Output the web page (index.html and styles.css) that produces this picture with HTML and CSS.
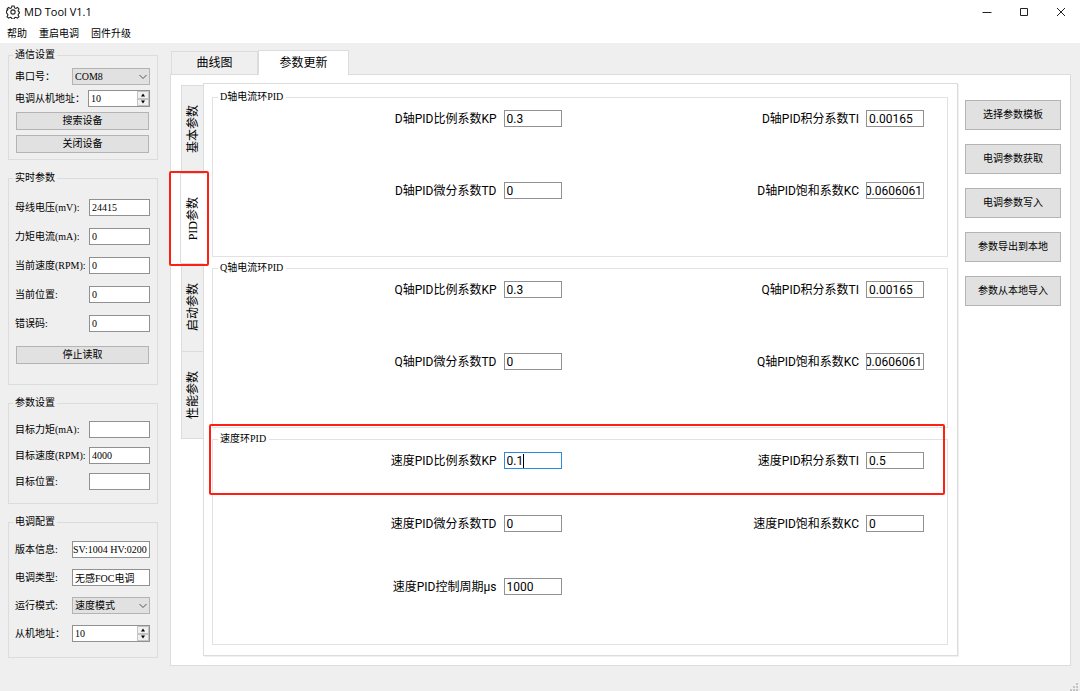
FILE: index.html
```html
<!DOCTYPE html>
<html lang="zh-CN">
<head>
<meta charset="utf-8">
<title>MD Tool V1.1</title>
<link rel="stylesheet" href="styles.css">
</head>
<body>
<header class="titlebar">
  <svg class="gear" viewBox="0 0 26 26" aria-hidden="true">
    <path d="M11 2h4l1 3.4 2.2.9 3.1-1.7 2.8 2.8-1.7 3.1.9 2.2 1.7.3v2l-1.7 1.3-.9 2.2 1.7 3.1-2.8 2.8-3.1-1.7-2.2.9-1 2.4h-4l-1-2.4-2.2-.9-3.1 1.7-2.8-2.8 1.7-3.1-.9-2.2L1 15v-4l1.700-.9.9-2.200-1.700-.5 2.800-2.800 3.100 1.700 2.200-.9z"/>
    <circle cx="13" cy="13" r="4"/>
  </svg>
  <h1 class="title">MD Tool V1.1</h1>
  <div class="winctl">
    <button type="button" aria-label="最小化"><svg viewBox="0 0 10 10"><path d="M0.500 5.500h9"/></svg></button>
    <button type="button" aria-label="最大化"><svg viewBox="0 0 10 10"><path d="M1.500 1.500h7v7h-7z"/></svg></button>
    <button type="button" aria-label="关闭"><svg viewBox="0 0 10 10"><path d="M1 1l8 8M9 1l-8 8"/></svg></button>
  </div>
</header>
<nav class="menubar">
  <button type="button">帮助</button>
  <button type="button">重启电调</button>
  <button type="button">固件升级</button>
</nav>

<div class="workspace">
  <aside class="sidebar">
    <fieldset class="group comm">
      <legend>通信设置</legend>
      <div class="row">
        <label for="port">串口号：</label>
        <span class="combo wide"><select id="port"><option>COM8</option></select><svg viewBox="0 0 8 6"><path d="M.5 1l3.500 3.500L7.500 1"/></svg></span>
      </div>
      <div class="row">
        <label for="addr">电调从机地址：</label>
        <span class="spin"><input id="addr" type="number" value="10"><span class="steps"><button type="button" aria-label="增加"><svg viewBox="0 0 6 4"><path d="M1 3.500h4L3 .5z"/></svg></button><button type="button" aria-label="减少"><svg viewBox="0 0 6 4"><path d="M1 .5h4L3 3.500z"/></svg></button></span></span>
      </div>
      <button type="button" class="btn">搜索设备</button>
      <button type="button" class="btn">关闭设备</button>
    </fieldset>

    <fieldset class="group live">
      <legend>实时参数</legend>
      <div class="row"><label for="volt">母线电压(mV):</label><input id="volt" class="box" type="text" value="24415"></div>
      <div class="row"><label for="cur">力矩电流(mA):</label><input id="cur" class="box" type="text" value="0"></div>
      <div class="row"><label for="rpm">当前速度(RPM):</label><input id="rpm" class="box" type="text" value="0"></div>
      <div class="row"><label for="pos">当前位置:</label><input id="pos" class="box" type="text" value="0"></div>
      <div class="row"><label for="err">错误码:</label><input id="err" class="box" type="text" value="0"></div>
      <button type="button" class="btn">停止读取</button>
    </fieldset>

    <fieldset class="group target">
      <legend>参数设置</legend>
      <div class="row"><label for="tcur">目标力矩(mA):</label><input id="tcur" class="box" type="text"></div>
      <div class="row"><label for="trpm">目标速度(RPM):</label><input id="trpm" class="box" type="text" value="4000"></div>
      <div class="row"><label for="tpos">目标位置:</label><input id="tpos" class="box" type="text"></div>
    </fieldset>

    <fieldset class="group config">
      <legend>电调配置</legend>
      <div class="row"><label for="ver">版本信息:</label><input id="ver" class="box wide tight" type="text" value="SV:1004 HV:0200"></div>
      <div class="row"><label for="kind">电调类型:</label><input id="kind" class="box wide" type="text" value="无感FOC电调"></div>
      <div class="row">
        <label for="mode">运行模式:</label>
        <span class="combo wide"><select id="mode"><option>速度模式</option></select><svg viewBox="0 0 8 6"><path d="M.5 1l3.500 3.500L7.500 1"/></svg></span>
      </div>
      <div class="row">
        <label for="slave">从机地址：</label>
        <span class="spin wide"><input id="slave" type="number" value="10"><span class="steps"><button type="button" aria-label="增加"><svg viewBox="0 0 6 4"><path d="M1 3.500h4L3 .5z"/></svg></button><button type="button" aria-label="减少"><svg viewBox="0 0 6 4"><path d="M1 .5h4L3 3.500z"/></svg></button></span></span>
      </div>
    </fieldset>
  </aside>

  <main class="main">
    <div class="tabs" role="tablist">
      <button type="button" class="tab" role="tab" aria-selected="false">曲线图</button>
      <button type="button" class="tab active" role="tab" aria-selected="true">参数更新</button>
    </div>
    <div class="page">
      <div class="vtabs" role="tablist">
        <button type="button" class="vtab" role="tab" aria-selected="false"><span>基本参数</span></button>
        <button type="button" class="vtab active marked" role="tab" aria-selected="true"><span>PID参数</span></button>
        <button type="button" class="vtab" role="tab" aria-selected="false"><span>启动参数</span></button>
        <button type="button" class="vtab" role="tab" aria-selected="false"><span>性能参数</span></button>
      </div>

      <div class="panel">
        <fieldset class="pid">
          <legend>D轴电流环PID</legend>
          <div class="fields">
            <div class="field"><label for="dkp">D轴PID比例系数KP</label><input id="dkp" type="text" value="0.3"></div>
            <div class="field"><label for="dti">D轴PID积分系数TI</label><input id="dti" type="text" value="0.00165"></div>
            <div class="field"><label for="dtd">D轴PID微分系数TD</label><input id="dtd" type="text" value="0"></div>
            <div class="field"><label for="dkc">D轴PID饱和系数KC</label><input id="dkc" class="tail" type="text" value="0.0606061"></div>
          </div>
        </fieldset>
        <fieldset class="pid">
          <legend>Q轴电流环PID</legend>
          <div class="fields">
            <div class="field"><label for="qkp">Q轴PID比例系数KP</label><input id="qkp" type="text" value="0.3"></div>
            <div class="field"><label for="qti">Q轴PID积分系数TI</label><input id="qti" type="text" value="0.00165"></div>
            <div class="field"><label for="qtd">Q轴PID微分系数TD</label><input id="qtd" type="text" value="0"></div>
            <div class="field"><label for="qkc">Q轴PID饱和系数KC</label><input id="qkc" class="tail" type="text" value="0.0606061"></div>
          </div>
        </fieldset>
        <div class="speed">
          <fieldset class="pid">
            <legend>速度环PID</legend>
            <div class="fields">
              <div class="field"><label for="skp">速度PID比例系数KP</label><span class="editing"><input id="skp" type="text" value="0.1"></span></div>
              <div class="field"><label for="sti">速度PID积分系数TI</label><input id="sti" type="text" value="0.5"></div>
              <div class="field"><label for="std">速度PID微分系数TD</label><input id="std" type="text" value="0"></div>
              <div class="field"><label for="skc">速度PID饱和系数KC</label><input id="skc" type="text" value="0"></div>
              <div class="field"><label for="sus">速度PID控制周期μs</label><input id="sus" type="text" value="1000"></div>
            </div>
          </fieldset>
        </div>
      </div>

      <div class="actions">
        <button type="button" class="btn">选择参数模板</button>
        <button type="button" class="btn">电调参数获取</button>
        <button type="button" class="btn">电调参数写入</button>
        <button type="button" class="btn">参数导出到本地</button>
        <button type="button" class="btn">参数从本地导入</button>
      </div>
    </div>
  </main>
</div>
<svg class="grip" viewBox="0 0 8 8" aria-hidden="true"><path d="M6 0h2v2H6zM3 3h2v2H3zM6 3h2v2H6zM0 6h2v2H0zM3 6h2v2H3zM6 6h2v2H6z"/></svg>
</body>
</html>
```
FILE: styles.css
```css
*, *::before, *::after { box-sizing: border-box; }

body {
  margin: 0;
  min-height: 100vh;
  position: relative;
  background: #efefef;
  color: #000;
  font: 10px/16px "Liberation Serif", "Noto Sans CJK SC", serif;
}

button, input, select {
  margin: 0;
  padding: 0;
  border: 0;
  border-radius: 0;
  background: none;
  color: inherit;
  font: inherit;
}

label { white-space: nowrap; }

/* Window frame */
.titlebar {
  display: flex;
  align-items: center;
  height: 24px;
  padding: 0 1px 0 6px;
  background: #fff;
}
.gear {
  width: 14px;
  height: 14px;
  fill: none;
  stroke: #222;
  stroke-width: 2;
}
.title {
  margin: 0 0 0 4px;
  font: 11px/16px "Open Sans", sans-serif;
}
.winctl { display: flex; margin-left: auto; }
.winctl button {
  display: grid;
  place-items: center;
  width: 37px;
  height: 24px;
}
.winctl svg {
  width: 10px;
  height: 10px;
  fill: none;
  stroke: #222;
  stroke-width: 1;
}
.menubar {
  display: flex;
  gap: 12px;
  height: 19px;
  padding: 1px 7px 0;
  background: #fff;
}
.menubar button { line-height: 16px; }

.workspace {
  display: flex;
  align-items: flex-start;
  gap: 12px;
  padding: 4px 9px 25px 8px;
}

/* Left column */
.sidebar {
  display: flex;
  flex-direction: column;
  flex: none;
  gap: 10px;
  width: 150px;
}
.group {
  min-width: 0;
  margin: 0;
  padding: 5px 7px 8px 6px;
  border: 1px solid #dcdcdc;
}
.group legend { margin-left: -2px; padding: 0 2px; }
.row {
  display: flex;
  align-items: center;
  justify-content: space-between;
  height: 17px;
  margin-bottom: 5px;
}
.comm { padding-bottom: 6px; }
.comm .btn + .btn { margin-top: 5px; }
.live { padding-top: 13px; padding-bottom: 20px; }
.live .row { margin-bottom: 12px; }
.live .btn { margin-top: 14px; }
.target { padding-top: 10px; padding-bottom: 4px; }
.target .row { margin-bottom: 9px; }
.config { padding-top: 11px; padding-bottom: 4px; }
.config .row { margin-bottom: 11px; }

.btn {
  display: block;
  border: 1px solid #b4b4b4;
  background: #e1e1e1;
  text-align: center;
}
.group .btn {
  width: 133px;
  height: 18px;
  margin-left: 1px;
}

.box {
  width: 61px;
  height: 17px;
  padding: 0 2px;
  border: 1px solid #919191;
  background: #fff;
}
.tight { padding: 0; }
.combo, .spin {
  position: relative;
  display: flex;
  width: 62px;
  height: 17px;
}
.box.wide, .combo.wide, .spin.wide { width: 78px; }
.combo select {
  width: 100%;
  padding: 0 2px;
  appearance: none;
  border: 1px solid #b4b4b4;
  background: #e1e1e1;
}
.combo svg {
  position: absolute;
  right: 3px;
  top: 6px;
  width: 8px;
  height: 6px;
  fill: none;
  stroke: #555;
  pointer-events: none;
}
.spin {
  border: 1px solid #919191;
  background: #fff;
}
.spin input {
  flex: 1;
  min-width: 0;
  padding-left: 2px;
  appearance: textfield;
}
.spin input::-webkit-inner-spin-button { appearance: none; }
.steps {
  display: grid;
  grid-template-rows: 1fr 1fr;
  width: 12px;
}
.steps button {
  display: grid;
  place-items: center;
  border: 1px solid #c4c4c4;
  background: #f0f0f0;
}
.steps svg { width: 6px; height: 4px; }

/* Tabbed area */
.main { flex: 1; min-width: 0; padding-top: 3px; }
.tabs {
  display: flex;
  align-items: flex-end;
  padding-left: 1px;
}
.tab {
  width: 87px;
  height: 23px;
  border: 1px solid #dcdcdc;
  border-bottom: 0;
  font-size: 12px;
}
.tab.active {
  z-index: 1;
  width: 91px;
  height: 25px;
  margin-bottom: -1px;
  background: #fff;
}
.page {
  display: flex;
  align-items: flex-start;
  padding: 8px 9px 9px;
  border: 1px solid #dcdcdc;
  background: #fff;
}
.vtabs { flex: none; padding-top: 2px; width: 23px; }
.vtab {
  position: relative;
  display: grid;
  place-items: center;
  width: 22px;
  height: 88px;
  margin-left: 1px;
  border: 1px solid #dcdcdc;
  border-width: 1px 0 0 1px;
  background: #efefef;
  font-size: 12px;
}
.vtab:last-child { border-bottom-width: 1px; }
.vtab span {
  writing-mode: vertical-rl;
  text-orientation: sideways;
  transform: rotate(180deg);
}
.vtab.active {
  z-index: 1;
  width: 24px;
  height: 90px;
  margin-left: 0;
  background: #fff;
}
.marked::after {
  content: "";
  position: absolute;
  inset: -3px -5px -3px -12px;
  border: 2px solid #ff2014;
  border-radius: 2px;
}

.panel {
  flex: 1;
  min-width: 0;
  padding: 5px 9px 10px 8px;
  border: 1px solid #dcdcdc;
  box-shadow: 1px 1px 0 #f0f0f0;
}
.pid {
  min-width: 0;
  margin: 0 0 3px;
  padding: 5px 23px 57px 5px;
  border: 1px solid #e2e2e2;
}
.pid legend { padding: 0 3px 0 2px; }
.fields {
  display: grid;
  grid-template-columns: 1fr 1fr;
  gap: 55px 14px;
  margin-left: -5px;
}
.field {
  display: flex;
  align-items: center;
  justify-content: flex-end;
  gap: 7px;
  height: 17px;
  font: 12px/16px Roboto, "Noto Sans CJK SC", sans-serif;
}
.field input {
  width: 58px;
  height: 17px;
  padding: 1px 2px 0;
  border: 1px solid #919191;
  background: #fff;
}
/* Values longer than the box show their last digits */
.field .tail { direction: rtl; padding-right: 1px; padding-left: 0; }
.editing { position: relative; display: flex; }
.field .editing input { border-color: #2a8ce0; }
.editing::after {
  content: "";
  position: absolute;
  left: 19px;
  top: 2px;
  width: 1px;
  height: 14px;
  background: #000;
}
.speed { position: relative; }
.speed .pid { margin: 0; padding-bottom: 49px; }
.speed .fields { row-gap: 46px; }
.speed::after {
  content: "";
  position: absolute;
  inset: -7px 3px auto -3px;
  height: 71px;
  border: 2px solid #ff2014;
  border-radius: 2px;
  pointer-events: none;
}

.actions {
  display: flex;
  flex-direction: column;
  flex: none;
  gap: 14px;
  width: 96px;
  margin-left: 7px;
  padding-top: 17px;
}
.actions .btn { height: 30px; }

.grip {
  position: absolute;
  right: 2px;
  bottom: 0;
  width: 8px;
  height: 8px;
  fill: #c4c4c4;
}
```
